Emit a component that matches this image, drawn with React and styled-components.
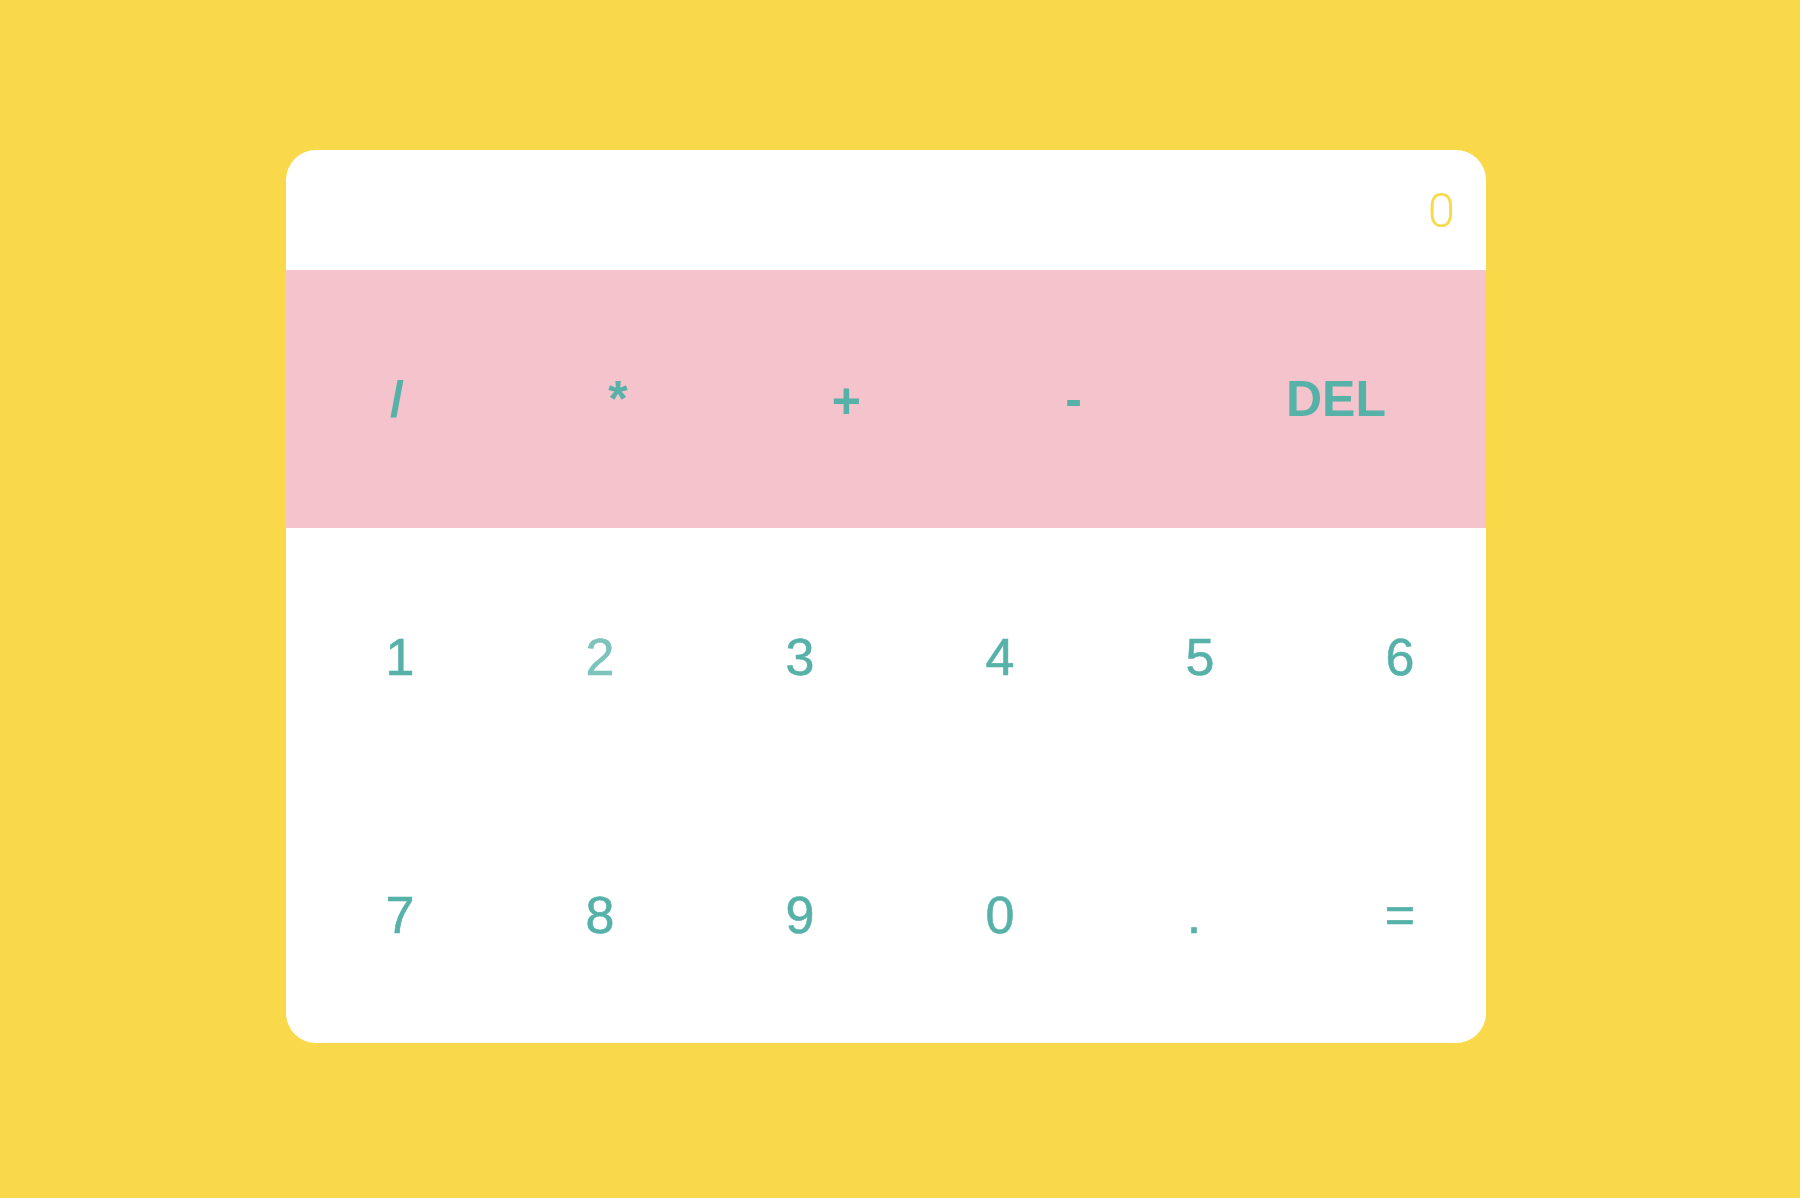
import React from 'react';
import styled, { createGlobalStyle } from 'styled-components';

const COLORS = {
  yellow: '#f9d949',
  pink: '#f4c3cb',
  teal: '#56b1a9',
  tealLight: '#7dc3bc',
};

const GlobalStyle = createGlobalStyle`
  html, body {
    margin: 0;
    padding: 0;
    background: ${COLORS.yellow};
    font-family: "Liberation Sans", Arial, sans-serif;
  }
`;

const Page = styled.div`
  width: 1800px;
  height: 1198px;
  box-sizing: border-box;
  padding: 150px 0 0 286px;
`;

const Card = styled.div`
  width: 1200px;
  height: 893px;
  background: white;
  border-radius: 30px;
  overflow: hidden;
  display: flex;
  flex-direction: column;
`;

const Display = styled.div`
  height: 120px;
  display: flex;
  align-items: center;
  justify-content: flex-end;
  padding-right: 31px;
  font-family: Roboto, "Liberation Sans", sans-serif;
  font-weight: 300;
  font-size: 49px;
  color: ${COLORS.yellow};
`;

const Operators = styled.div`
  height: 258px;
  background: ${COLORS.pink};
  display: flex;
  align-items: center;
`;

const OpButton = styled.div`
  flex: 1 1 auto;
  text-align: center;
  font-size: 50px;
  font-weight: bold;
  color: ${COLORS.teal};
  padding-left: 4px;
  padding-top: ${(p) => p.$drop || 0}px;
`;

const Digits = styled.div`
  flex: 1;
  display: grid;
  grid-template-columns: repeat(6, 200px);
  grid-template-rows: 258px 257px;
`;

const DigitButton = styled.div`
  display: flex;
  align-items: center;
  justify-content: center;
  padding-left: ${(p) => (p.$narrow ? 16 : 28)}px;
  font-size: 52px;
  -webkit-text-stroke: 0.6px currentColor;
  color: ${(p) => (p.$light ? COLORS.tealLight : COLORS.teal)};
`;

const OPERATORS = ['/', '*', '+', '-', 'DEL'];
const KEYS = ['1', '2', '3', '4', '5', '6', '7', '8', '9', '0', '.', '='];

const App = () => {
  return (
    <>
      <GlobalStyle />
      <Page>
        <Card>
          <Display>0</Display>
          <Operators>
            {OPERATORS.map((op) => (
              <OpButton key={op} $drop={op === '+' ? 4 : 0}>
                {op}
              </OpButton>
            ))}
          </Operators>
          <Digits>
            {KEYS.map((k) => (
              <DigitButton key={k} $light={k === '2'} $narrow={k === '.'}>
                {k}
              </DigitButton>
            ))}
          </Digits>
        </Card>
      </Page>
    </>
  );
};

export default App;
